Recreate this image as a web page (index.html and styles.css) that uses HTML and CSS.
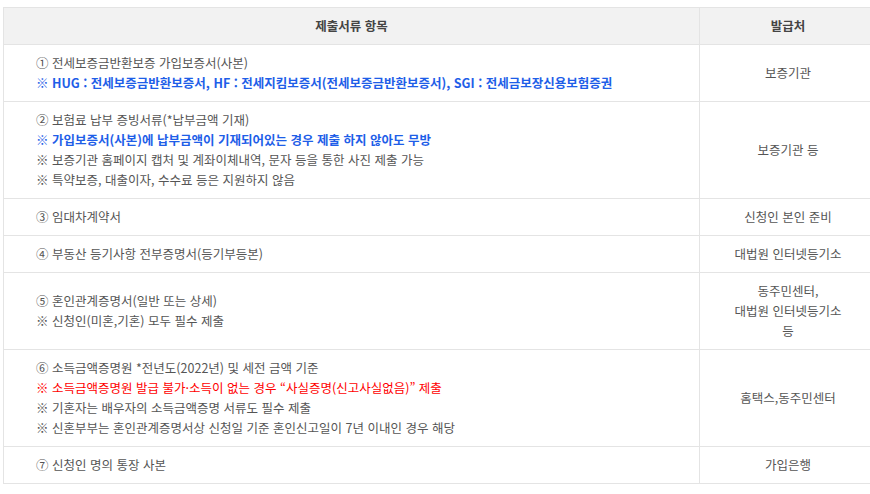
FILE: index.html
```html
<!DOCTYPE html>
<html lang="ko">
<head>
    <meta charset="UTF-8">
    <meta name="viewport" content="width=device-width, initial-scale=1.0">
    <title>제출서류</title>
    <link rel="stylesheet" href="styles.css">
</head>
<body>
    <div class="doc-wrap">
        <table class="doc-table">
            <colgroup>
                <col class="col-item">
                <col class="col-issuer">
            </colgroup>
            <thead>
                <tr>
                    <th>제출서류 항목</th>
                    <th>발급처</th>
                </tr>
            </thead>
            <tbody>
                <tr>
                    <td class="item">
                        <p>① 전세보증금반환보증 가입보증서(사본)</p>
                        <p class="note-blue">※ HUG : 전세보증금반환보증서, HF : 전세지킴보증서(전세보증금반환보증서), SGI : 전세금보장신용보험증권</p>
                    </td>
                    <td class="issuer">보증기관</td>
                </tr>
                <tr>
                    <td class="item">
                        <p>② 보험료 납부 증빙서류(*납부금액 기재)</p>
                        <p class="note-blue">※ 가입보증서(사본)에 납부금액이 기재되어있는 경우 제출 하지 않아도 무방</p>
                        <p>※ 보증기관 홈페이지 캡처 및 계좌이체내역, 문자 등을 통한 사진 제출 가능</p>
                        <p>※ 특약보증, 대출이자, 수수료 등은 지원하지 않음</p>
                    </td>
                    <td class="issuer">보증기관 등</td>
                </tr>
                <tr>
                    <td class="item"><p>③ 임대차계약서</p></td>
                    <td class="issuer">신청인 본인 준비</td>
                </tr>
                <tr>
                    <td class="item"><p>④ 부동산 등기사항 전부증명서(등기부등본)</p></td>
                    <td class="issuer">대법원 인터넷등기소</td>
                </tr>
                <tr>
                    <td class="item">
                        <p>⑤ 혼인관계증명서(일반 또는 상세)</p>
                        <p>※ 신청인(미혼,기혼) 모두 필수 제출</p>
                    </td>
                    <td class="issuer">동주민센터,<br>대법원 인터넷등기소<br>등</td>
                </tr>
                <tr>
                    <td class="item">
                        <p>⑥ 소득금액증명원 *전년도(2022년) 및 세전 금액 기준</p>
                        <p class="note-red">※ 소득금액증명원 발급 불가·소득이 없는 경우 “사실증명(신고사실없음)” 제출</p>
                        <p>※ 기혼자는 배우자의 소득금액증명 서류도 필수 제출</p>
                        <p>※ 신혼부부는 혼인관계증명서상 신청일 기준 혼인신고일이 7년 이내인 경우 해당</p>
                    </td>
                    <td class="issuer">홈택스,동주민센터</td>
                </tr>
                <tr>
                    <td class="item"><p>⑦ 신청인 명의 통장 사본</p></td>
                    <td class="issuer">가입은행</td>
                </tr>
            </tbody>
        </table>
    </div>
</body>
</html>
```

FILE: styles.css
```css
html, body {
    margin: 0;
    padding: 0;
    overflow: hidden;
}
body {
    font-family: "Noto Sans CJK KR", "Noto Sans", sans-serif;
    font-size: 12.5px;
    line-height: 20px;
    color: #555;
    background: #fff;
}
.doc-wrap {
    padding: 7px 0 0 3px;
    width: 873px;
}
.doc-table {
    width: 873px;
    border-collapse: collapse;
    table-layout: fixed;
}
.col-item {
    width: 696px;
}
.col-issuer {
    width: 177px;
}
.doc-table th,
.doc-table td {
    border: 1px solid #e4e4e4;
    padding: 8px 0;
    vertical-align: middle;
}
.doc-table th {
    background-color: #f2f2f2;
    color: #444;
    font-weight: 700;
    text-align: center;
}
.doc-table td.item {
    padding-left: 32px;
    text-align: left;
}
.doc-table td.issuer {
    text-align: center;
}
.item p {
    margin: 0;
}
.note-blue {
    color: #1e5ee8;
    font-weight: 700;
}
.note-red {
    color: #ff0000;
    font-weight: 400;
}
```
